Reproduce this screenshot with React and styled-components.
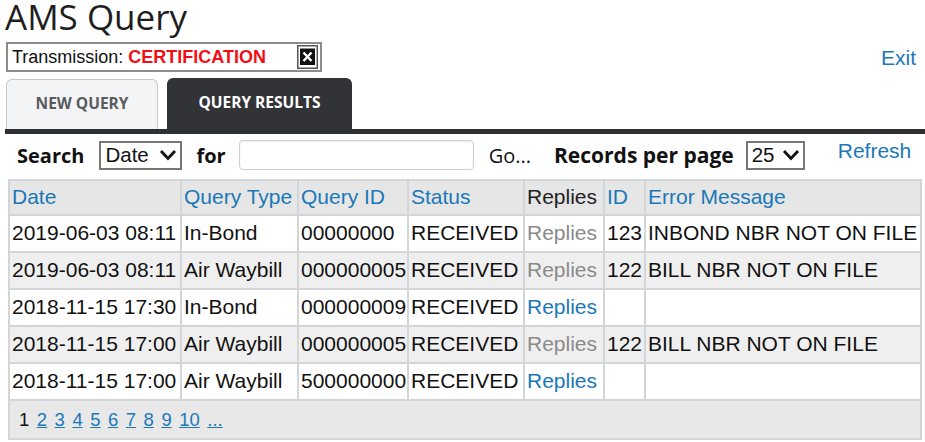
import React from "react";
import styled, { createGlobalStyle } from "styled-components";

const Global = createGlobalStyle`
  html, body { margin: 0; padding: 0; background: #fff; }
  body { font-family: "Liberation Sans", Arial, sans-serif; color: #111; }
  * { box-sizing: border-box; }
`;

const BLUE = "#1a78b8";

const Page = styled.div`
  width: 925px;
  padding-left: 5px;
  padding-top: 2px;
`;

const Title = styled.h1`
  margin: 0;
  font-family: "Open Sans", "Noto Sans", sans-serif;
  font-weight: 400;
  font-size: 35px;
  line-height: 30px;
  height: 30px;
  color: #1e1e1e;
`;

const TopRow = styled.div`
  display: flex;
  align-items: center;
  justify-content: space-between;
  margin-top: 10px;
  padding-left: 1px;
  padding-right: 9px;
`;

const TransBox = styled.div`
  width: 316px;
  height: 30px;
  border: 2px solid #8c8c8c;
  display: flex;
  align-items: center;
  padding: 0 2px 0 4px;
  font-size: 18px;
  color: #111;
`;

const Cert = styled.span`
  color: #f20d14;
  font-weight: 700;
  margin-left: 5px;
`;

const CloseBtn = styled.span`
  margin-left: auto;
  display: flex;
`;

const ExitLink = styled.a`
  color: ${BLUE};
  font-size: 21px;
  text-decoration: none;
  margin-top: 2px;
`;

const Tabs = styled.div`
  display: flex;
  align-items: flex-end;
  gap: 9px;
  margin-top: 6px;
  padding-left: 1px;
`;

const Tab = styled.div`
  width: ${(p) => p.$w}px;
  height: ${(p) => (p.$active ? 51 : 50)}px;
  border-radius: 6px 6px 0 0;
  display: flex;
  align-items: center;
  justify-content: center;
  padding-bottom: 3px;
  font-family: "Open Sans", "Noto Sans", sans-serif;
  font-weight: 700;
  font-size: 15.5px;
  text-transform: uppercase;
  background: ${(p) => (p.$active ? "#323337" : "#f3f4f6")};
  color: ${(p) => (p.$active ? "#fff" : "#5a5b60")};
  border: ${(p) => (p.$active ? "none" : "1px solid #c6c7ca")};
  border-bottom: none;
`;

const DarkBar = styled.div`
  height: 5px;
  background: #2f3034;
`;

const SearchRow = styled.div`
  display: flex;
  align-items: center;
  height: 30px;
  margin-top: 6px;
  padding-left: 12px;
`;

const Label = styled.span`
  font-family: "Open Sans", "Noto Sans", sans-serif;
  font-weight: ${(p) => (p.$bold ? 700 : 400)};
  font-size: ${(p) => p.$size || 20}px;
  color: #111;
  margin-left: ${(p) => p.$ml || 0}px;
  white-space: nowrap;
`;

const SelectBox = styled.div`
  width: ${(p) => p.$w}px;
  height: 29px;
  margin-left: ${(p) => p.$ml}px;
  border: 2px solid #777;
  display: flex;
  align-items: center;
  justify-content: space-between;
  padding: 0 3px 0 4px;
  font-size: 20.5px;
  color: #111;
  background: #fff;
`;

const TextInput = styled.div`
  width: 235px;
  height: 30px;
  margin-left: 13px;
  border: 1px solid #cfcfcf;
  border-radius: 4px;
  box-shadow: inset 0 1px 2px rgba(0, 0, 0, 0.08);
  background: #fff;
`;

const RefreshLink = styled.a`
  align-self: flex-start;
  margin-top: -1px;
  margin-left: 33px;
  color: ${BLUE};
  font-size: 21px;
  text-decoration: none;
`;

const Table = styled.table`
  margin-top: 9px;
  margin-left: 3px;
  width: 914px;
  table-layout: fixed;
  border-collapse: separate;
  border-spacing: 2px;
  background: #d2d6d9;
  font-size: 21px;
  line-height: 24px;
`;

const HeadCell = styled.th`
  height: 33px;
  padding: 0 2px 1px;
  text-align: left;
  font-weight: 400;
  white-space: nowrap;
  background: #e6e6e6;
  color: ${(p) => (p.$plain ? "#222" : BLUE)};
`;

const Row = styled.tr`
  background: ${(p) => (p.$alt ? "#efefef" : "#fff")};
`;

const Cell = styled.td`
  height: 35px;
  padding: 0 2px 2px;
  white-space: nowrap;
  overflow: hidden;
  color: #111;
`;

const ReplyText = styled.span`
  color: ${(p) => (p.$link ? BLUE : "#8a8a8a")};
`;

const PagerCell = styled.td`
  height: 37px;
  background: #e8e8e8;
  padding: 0 0 0 9px;
`;

const Pager = styled.div`
  display: flex;
  gap: 7.5px;
  font-size: 18.5px;
`;

const PageLink = styled.a`
  color: ${(p) => (p.$current ? "#111" : BLUE)};
  text-decoration: ${(p) => (p.$current ? "none" : "underline")};
`;

const Chevron = () => (
  <svg width="18" height="12" viewBox="0 0 18 12">
    <path d="M2 2 L9 9.5 L16 2" fill="none" stroke="#111" strokeWidth="2.8" />
  </svg>
);

const CloseIcon = () => (
  <svg width="21" height="24" viewBox="0 0 21 24">
    <rect x="0.75" y="0.75" width="19.5" height="22.5" fill="#fff" stroke="#555" strokeWidth="1.5" />
    <rect x="3" y="3.5" width="15" height="16.5" fill="#111" />
    <path d="M6.5 7.5 L14.5 16 M14.5 7.5 L6.5 16" stroke="#fff" strokeWidth="2.4" />
  </svg>
);

const rows = [
  ["2019-06-03 08:11", "In-Bond", "00000000", "RECEIVED", false, "123", "INBOND NBR NOT ON FILE"],
  ["2019-06-03 08:11", "Air Waybill", "000000005", "RECEIVED", false, "122", "BILL NBR NOT ON FILE"],
  ["2018-11-15 17:30", "In-Bond", "000000009", "RECEIVED", true, "", ""],
  ["2018-11-15 17:00", "Air Waybill", "000000005", "RECEIVED", false, "122", "BILL NBR NOT ON FILE"],
  ["2018-11-15 17:00", "Air Waybill", "500000000", "RECEIVED", true, "", ""],
];

const widths = [170, 115, 108, 114, 78, 39, 274];

export default function App() {
  return (
    <>
      <Global />
      <Page>
        <Title>AMS Query</Title>
        <TopRow>
          <TransBox>
            Transmission:<Cert>CERTIFICATION</Cert>
            <CloseBtn>
              <CloseIcon />
            </CloseBtn>
          </TransBox>
          <ExitLink href="#">Exit</ExitLink>
        </TopRow>
        <Tabs>
          <Tab $w={152}>New Query</Tab>
          <Tab $w={185} $active>
            Query Results
          </Tab>
        </Tabs>
        <DarkBar />
        <SearchRow>
          <Label $bold>Search</Label>
          <SelectBox $w={83} $ml={15}>
            <span>Date</span>
            <Chevron />
          </SelectBox>
          <Label $bold $ml={14}>
            for
          </Label>
          <TextInput />
          <Label $ml={15}>Go...</Label>
          <Label $bold $ml={23} $size={21}>
            Records per page
          </Label>
          <SelectBox $w={59} $ml={12}>
            <span>25</span>
            <Chevron />
          </SelectBox>
          <RefreshLink href="#">Refresh</RefreshLink>
        </SearchRow>
        <Table>
          <colgroup>
            {widths.map((w, i) => (
              <col key={i} style={{ width: w }} />
            ))}
          </colgroup>
          <thead>
            <tr>
              <HeadCell>Date</HeadCell>
              <HeadCell>Query Type</HeadCell>
              <HeadCell>Query ID</HeadCell>
              <HeadCell>Status</HeadCell>
              <HeadCell $plain>Replies</HeadCell>
              <HeadCell>ID</HeadCell>
              <HeadCell>Error Message</HeadCell>
            </tr>
          </thead>
          <tbody>
            {rows.map((r, i) => (
              <Row key={i} $alt={i % 2 === 1}>
                <Cell>{r[0]}</Cell>
                <Cell>{r[1]}</Cell>
                <Cell>{r[2]}</Cell>
                <Cell>{r[3]}</Cell>
                <Cell>
                  <ReplyText $link={r[4]}>Replies</ReplyText>
                </Cell>
                <Cell>{r[5]}</Cell>
                <Cell>{r[6]}</Cell>
              </Row>
            ))}
            <tr>
              <PagerCell colSpan={7}>
                <Pager>
                  <PageLink $current>1</PageLink>
                  {["2", "3", "4", "5", "6", "7", "8", "9", "10", "..."].map((p) => (
                    <PageLink key={p} href="#">
                      {p}
                    </PageLink>
                  ))}
                </Pager>
              </PagerCell>
            </tr>
          </tbody>
        </Table>
      </Page>
    </>
  );
}
